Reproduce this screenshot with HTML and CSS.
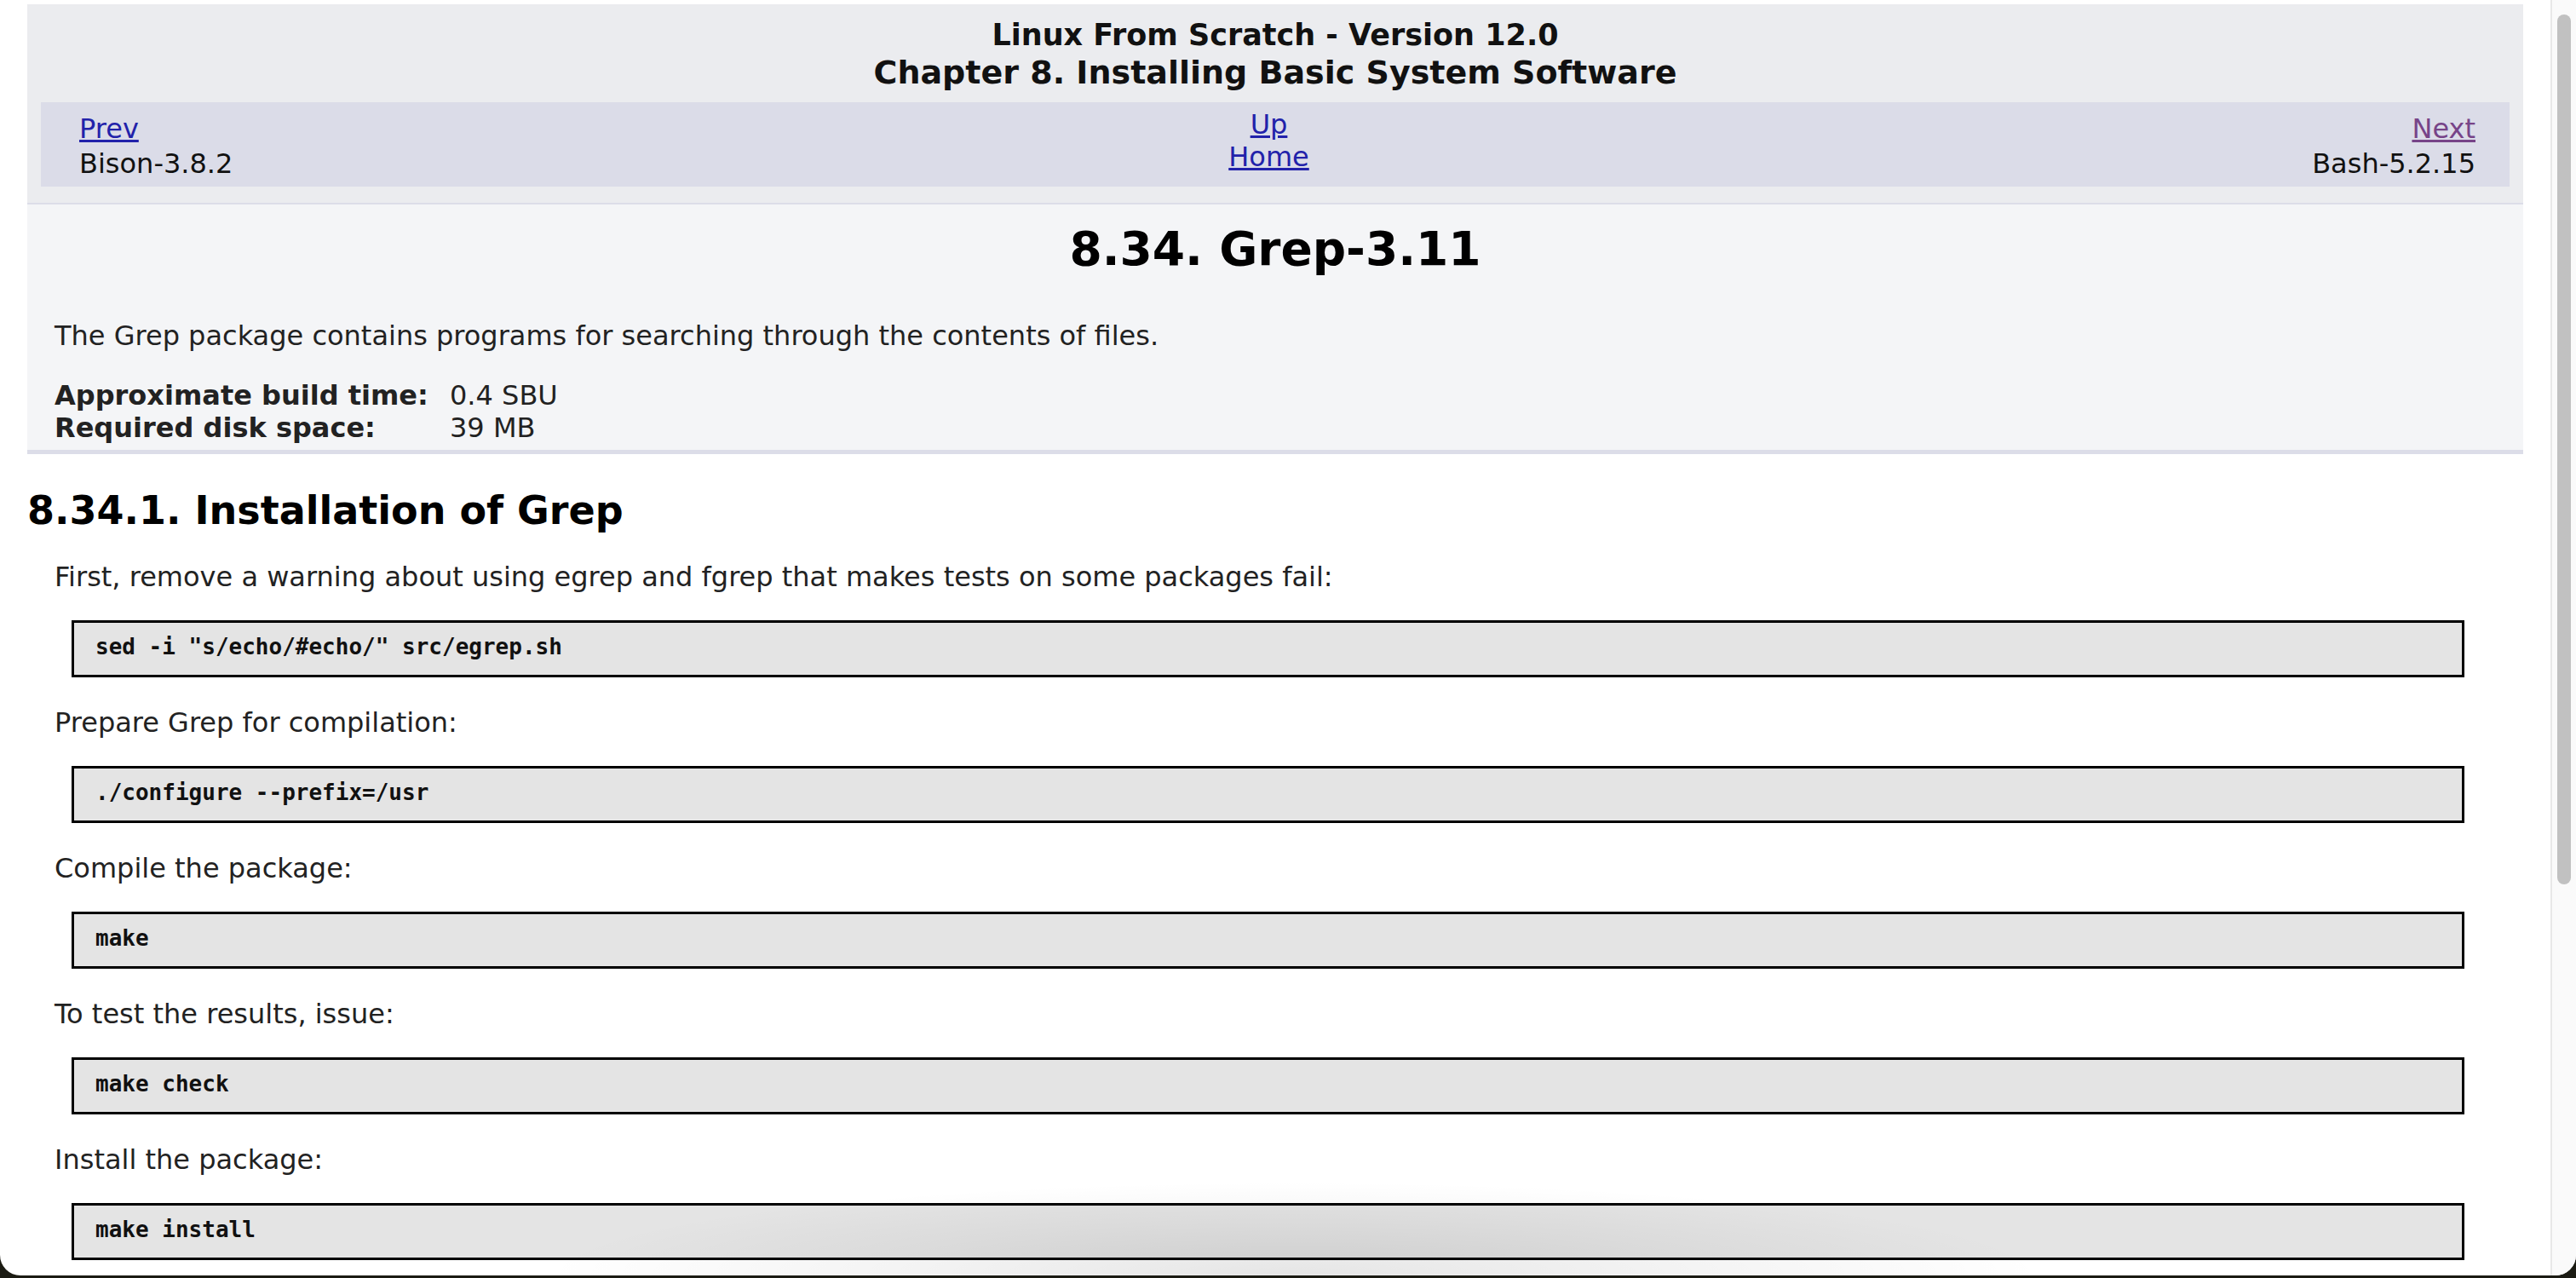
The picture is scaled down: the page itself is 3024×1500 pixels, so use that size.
FILE: index.html
```html
<!DOCTYPE html>
<html lang="en">
<head>
<meta charset="utf-8">
<title>8.34. Grep-3.11</title>
<link rel="stylesheet" href="styles.css">
</head>
<body>
<div class="window">
  <div class="page">
    <div class="navheader">
      <h4>Linux From Scratch - Version 12.0</h4>
      <h3>Chapter 8. Installing Basic System Software</h3>
      <ul class="nav">
        <li class="prev"><a href="#">Prev</a><span>Bison-3.8.2</span></li>
        <li class="mid"><a href="#">Up</a><a href="#">Home</a></li>
        <li class="next"><a href="#" class="visited">Next</a><span>Bash-5.2.15</span></li>
      </ul>
    </div>
    <div class="package">
      <h1>8.34. Grep-3.11</h1>
      <p>The Grep package contains programs for searching through the contents of files.</p>
      <div class="req">
        <strong>Approximate build time:</strong><span>0.4 SBU</span>
        <strong>Required disk space:</strong><span>39 MB</span>
      </div>
    </div>
    <h2>8.34.1. Installation of Grep</h2>
    <div class="install">
      <p>First, remove a warning about using egrep and fgrep that makes tests on some packages fail:</p>
      <pre>sed -i "s/echo/#echo/" src/egrep.sh</pre>
      <p>Prepare Grep for compilation:</p>
      <pre>./configure --prefix=/usr</pre>
      <p>Compile the package:</p>
      <pre>make</pre>
      <p>To test the results, issue:</p>
      <pre>make check</pre>
      <p>Install the package:</p>
      <pre>make install</pre>
    </div>
  </div>
  <div class="scrollbar"><div class="thumb"></div></div>
  <div class="shadow"></div>
</div>
</body>
</html>
```
FILE: styles.css
```css
* { box-sizing: border-box; }
html, body {
  margin: 0;
  padding: 0;
  height: 1500px;
  overflow: hidden;
  background: #1b1b13;
}
body {
  font-family: "DejaVu Sans", Verdana, sans-serif;
  font-size: 32px;
  color: #222;
}
.window {
  position: relative;
  height: 1497px;
  background: #fff;
  border-radius: 0 0 24px 24px;
  overflow: hidden;
  display: flex;
}
.page {
  flex: 1;
  min-width: 0;
  padding: 5px 32px 0;
}
.scrollbar {
  width: 30px;
  flex: none;
  border-left: 2px solid #e8e8e8;
  background: #fafafa;
  padding: 17px 0 0 6px;
}
.thumb {
  width: 16px;
  height: 1021px;
  border-radius: 8px;
  background: #c1c1c1;
}
.shadow {
  position: absolute;
  left: 640px;
  bottom: 0;
  width: 1760px;
  height: 110px;
  background: radial-gradient(ellipse 50% 100% at 50% 100%, rgba(0,0,0,0.1), rgba(0,0,0,0.045) 55%, rgba(0,0,0,0) 100%);
  pointer-events: none;
}

a { color: #2222aa; text-decoration: underline; text-decoration-thickness: 3px; text-underline-offset: 2px; }
a.visited { color: #774488; }

.navheader {
  background: #ebecef;
  padding: 15px 16px 19px;
  border-bottom: 2px solid #dcdde8;
  text-align: center;
  color: #111;
}
.navheader h4 {
  margin: 0;
  font-size: 35px;
  line-height: 43px;
  font-weight: bold;
}
.navheader h3 {
  margin: 0;
  font-size: 38px;
  line-height: 44px;
  font-weight: bold;
}
.nav {
  list-style: none;
  margin: 13px 0 0;
  padding: 11px 40px 6px 45px;
  background: #dbdce8;
  display: flex;
  line-height: 41px;
  text-align: left;
}
.nav li { display: flex; flex-direction: column; }
.nav .prev { flex: 1; align-items: flex-start; }
.nav .next { flex: 1; align-items: flex-end; }
.nav .mid {
  align-items: center;
  line-height: 38px;
  margin: -4px 20px 0 0;
}

.package {
  background: #f4f5f7;
  padding: 19px 32px 7px;
  border-bottom: 5px solid #dcdde8;
}
h1 {
  margin: 0;
  font-size: 55px;
  line-height: 66px;
  text-align: center;
  color: #000;
}
.package p {
  margin: 50px 0 0;
  line-height: 38px;
}
.req {
  display: grid;
  grid-template-columns: 464px auto;
  margin-top: 32px;
  line-height: 38px;
}
.req strong { font-weight: bold; }

h2 {
  margin: 39px 0 0;
  font-size: 46px;
  line-height: 54px;
  color: #000;
}
.install p {
  margin: 34px 0 0 32px;
  line-height: 38px;
}
.install p:first-child { margin-top: 32px; }
.install pre {
  margin: 32px 69px 0 52px;
  font-family: "DejaVu Sans Mono", Menlo, monospace;
  font-size: 26px;
  font-weight: bold;
  line-height: 31px;
  background: #e4e4e4;
  border: 3px solid #000;
  padding: 13px 25px 17px;
  color: #111;
}
```
